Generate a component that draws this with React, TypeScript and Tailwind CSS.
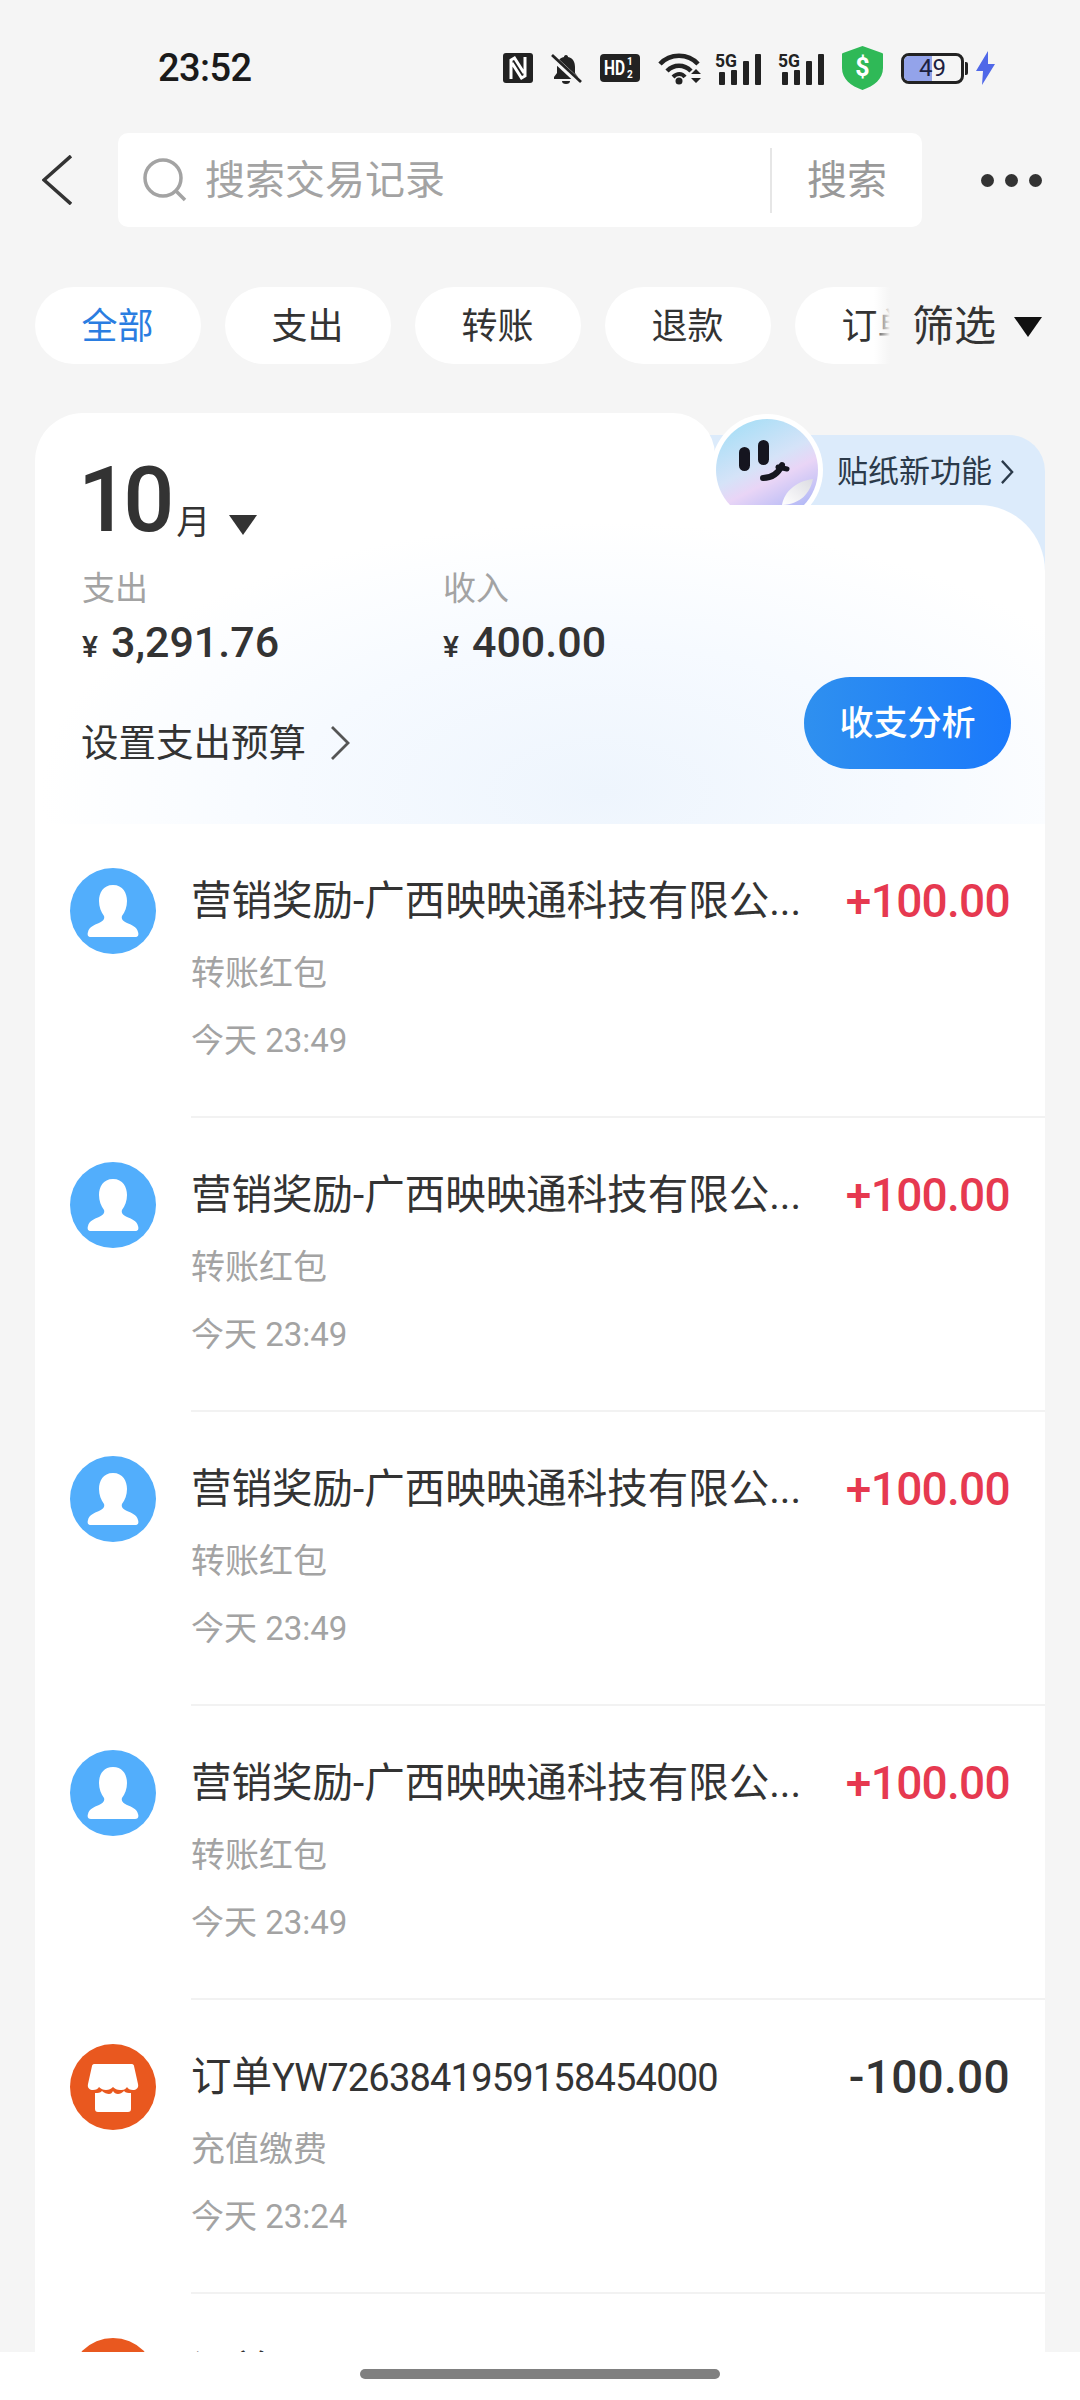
const FONT = "font-['Roboto','Noto_Sans_CJK_SC',sans-serif]";

const rows = [
  { kind: 'person', title: '营销奖励-广西映映通科技有限公...', sub: '转账红包', time: '今天 23:49', amount: '+100.00' },
  { kind: 'person', title: '营销奖励-广西映映通科技有限公...', sub: '转账红包', time: '今天 23:49', amount: '+100.00' },
  { kind: 'person', title: '营销奖励-广西映映通科技有限公...', sub: '转账红包', time: '今天 23:49', amount: '+100.00' },
  { kind: 'person', title: '营销奖励-广西映映通科技有限公...', sub: '转账红包', time: '今天 23:49', amount: '+100.00' },
  { kind: 'shop', title: '订单', code: 'YW7263841959158454000', sub: '充值缴费', time: '今天 23:24', amount: '-100.00' },
  { kind: 'shop', title: '订单', code: 'YW7263841959158454000', sub: '充值缴费', time: '今天 23:24', amount: '-100.00' },
];

function PersonIcon() {
  return (
    <svg viewBox="0 0 86 86" className="w-[86px] h-[86px] shrink-0">
      <circle cx="43" cy="43" r="43" fill="#52aefc" />
      <path d="M43 17c-10 0-14 8-14 16 0 6 2 11 5 15 1 3-1 5-5 7-5 2-10 4-11 9-1 3 0 5 3 5h44c3 0 4-2 3-5-1-5-6-7-11-9-4-2-6-4-5-7 3-4 5-9 5-15 0-8-4-16-14-16z" fill="#fff" />
    </svg>
  );
}

function ShopIcon() {
  return (
    <svg viewBox="0 0 86 86" className="w-[86px] h-[86px] shrink-0">
      <circle cx="43" cy="43" r="43" fill="#e9581f" />
      <path d="M24 20h38c1 0 2 1 2 2l4 18c1 4-2 6-5 6-3 0-5-1-6-3-2 3-4 3-7 3s-5-1-7-3c-2 2-4 3-7 3s-5-1-7-3c-1 2-3 3-6 3s-6-2-5-6l4-18c0-1 1-2 2-2z" fill="#fff" />
      <path d="M25 49c3 0 5 0 7-2 2 2 5 3 7 3 2 0 3-1 4-3 1 2 3 3 5 3 2 0 4-1 6-3 2 2 4 2 7 2v16c0 2-1 3-3 3H28c-2 0-3-1-3-3z" fill="#fff" />
    </svg>
  );
}

function Signal() {
  return (
    <svg viewBox="0 -4 47 41" className="w-[47px] h-[41px]">
      <text x="0" y="15" fontSize="19" fontWeight="700" fontFamily="Roboto" fill="#222" textLength="22" lengthAdjust="spacingAndGlyphs">5G</text>
      <rect x="4" y="20" width="6" height="13" rx="1" fill="#222" />
      <rect x="16" y="18" width="6" height="15" rx="1" fill="#222" />
      <rect x="28" y="9" width="6" height="24" rx="1" fill="#222" />
      <rect x="40" y="2" width="6" height="31" rx="1" fill="#222" />
    </svg>
  );
}

function StatusIcons() {
  return (
    <div className="flex items-center">
      {/* NFC */}
      <svg viewBox="0 0 30 30" className="w-[30px] h-[30px]">
        <rect width="30" height="30" rx="3" fill="#222" />
        <path d="M8 26V7l3.500-2L21 20M22 4v19l-3.500 2L9 10" fill="none" stroke="#fff" strokeWidth="3" />
      </svg>
      {/* muted bell */}
      <svg viewBox="0 0 32 33" className="w-[32px] h-[33px] ml-[17px]">
        <path d="M16 3c-1.500 0-2 1-2 2-5 1-7 5-7 10v6l-3 4v2h24v-2l-3-4v-6c0-5-2-9-7-10 0-1-.5-2-2-2z" fill="#222" />
        <path d="M12 29a4 3 0 0 0 8 0z" fill="#222" />
        <path d="M1 4l29 27" stroke="#f5f5f5" strokeWidth="6" />
        <path d="M2 3l29 27" stroke="#222" strokeWidth="2.800" />
      </svg>
      {/* HD badge */}
      <svg viewBox="0 0 40 28" className="w-[40px] h-[28px] ml-[18px]">
        <rect width="40" height="28" rx="4" fill="#222" />
        <text x="4" y="21" fontSize="20" fontWeight="700" fontFamily="Roboto" fill="#fff" textLength="21" lengthAdjust="spacingAndGlyphs">HD</text>
        <text x="27" y="11" fontSize="10" fontWeight="700" fontFamily="Roboto" fill="#fff">1</text>
        <text x="27" y="24" fontSize="10" fontWeight="700" fontFamily="Roboto" fill="#fff">2</text>
      </svg>
      {/* wifi */}
      <svg viewBox="0 0 45 33" className="w-[45px] h-[33px] ml-[18px]">
        <path d="M2 12C12 1 30 1 40 12" fill="none" stroke="#222" strokeWidth="4.500" />
        <path d="M9 19c7-7 17-7 24 0" fill="none" stroke="#222" strokeWidth="4.500" />
        <path d="M15 25c4-4 9-4 12 0" fill="none" stroke="#222" strokeWidth="4" />
        <circle cx="21" cy="29" r="3.500" fill="#222" />
        <path d="M33 22l5-5 5 5zM33 26l5 5 5-5z" fill="#222" />
      </svg>
      <div className="ml-[12px]"><Signal /></div>
      <div className="ml-[16px]"><Signal /></div>
      {/* shield */}
      <svg viewBox="0 0 41 44" className="w-[41px] h-[44px] ml-[17px]">
        <path d="M20.500 0L40 7c1 0 1 1 1 2v13c0 11-9 18-20.500 22C9 40 0 33 0 22V9c0-1 0-2 1-2z" fill="#2fb957" />
        <text x="20.500" y="30" textAnchor="middle" fontSize="25" fontWeight="700" fontFamily="Roboto" fill="#fff">$</text>
      </svg>
      {/* battery */}
      <div className="ml-[18px] flex items-center">
        <div className="relative w-[63px] h-[31px] rounded-[8px] border-[3px] border-[#222] overflow-hidden">
          <div className="h-full w-[28px] bg-[#93a3ea]" />
          <span className="absolute inset-0 flex items-center justify-center text-[24px] leading-none text-[#1c2140]">49</span>
        </div>
        <div className="w-[3px] h-[13px] ml-[1px] bg-[#222] rounded-r-[2px]" />
      </div>
      {/* charging */}
      <svg viewBox="0 0 19 34" className="w-[19px] h-[34px] ml-[8px]">
        <path d="M12 0L0 20h7L6 34 19 13h-7z" fill="#5068e8" />
      </svg>
    </div>
  );
}

function Face() {
  return (
    <svg viewBox="0 0 114 114" className="w-[114px] h-[114px]">
      <defs>
        <linearGradient id="faceBg" x1="0.2" y1="0" x2="0.7" y2="1">
          <stop offset="0" stopColor="#a5def6" />
          <stop offset="0.45" stopColor="#d5e3f8" />
          <stop offset="0.62" stopColor="#e9d5f6" />
          <stop offset="1" stopColor="#aab5f6" />
        </linearGradient>
        <linearGradient id="peel" x1="0" y1="1" x2="1" y2="0">
          <stop offset="0" stopColor="#ffffff" />
          <stop offset="1" stopColor="#dcdce2" />
        </linearGradient>
      </defs>
      <circle cx="57" cy="57" r="56" fill="#fff" />
      <circle cx="57" cy="57" r="51" fill="url(#faceBg)" />
      <rect x="29" y="34" width="11" height="24" rx="5.500" fill="#15151f" />
      <rect x="48" y="27" width="11" height="25" rx="5.500" fill="#15151f" />
      <path d="M53 65c9 0 15-4 19-13" fill="none" stroke="#15151f" strokeWidth="6" strokeLinecap="round" />
      <path d="M68 54l9 2" fill="none" stroke="#15151f" strokeWidth="5" strokeLinecap="round" />
      <path d="M72 92c2-13 14-24 31-26-3 14-12 25-31 26z" fill="url(#peel)" />
    </svg>
  );
}

export default function App() {
  return (
    <div className={`relative h-[2400px] w-[1080px] overflow-hidden bg-[#f5f5f5] ${FONT}`}>
      {/* status bar */}
      <div className="flex h-[133px] items-start justify-between pl-[158px] pr-[85px] pt-[46px]">
        <span className="text-[38px] leading-[44px] font-medium tracking-[-0.6px] text-[#1a1a1a]">23:52</span>
        <StatusIcons />
      </div>

      {/* search row */}
      <div className="flex h-[94px] items-center pl-[42px]">
        <svg viewBox="0 0 30 50" className="w-[30px] h-[50px] shrink-0">
          <path d="M29 1L2 25l27 24" fill="none" stroke="#333" strokeWidth="3.500" />
        </svg>
        <div className="ml-[46px] flex h-[94px] w-[804px] items-center rounded-[10px] bg-white pl-[25px]">
          <svg viewBox="0 0 44 44" className="w-[44px] h-[44px] shrink-0">
            <circle cx="20" cy="20" r="18" fill="none" stroke="#a3a3a3" strokeWidth="3.500" />
            <path d="M33 33l9 9" stroke="#a3a3a3" strokeWidth="3.500" />
          </svg>
          <span className="ml-[18px] w-[565px] pt-[2px] text-[40px] leading-none text-[#a3a3a3]">搜索交易记录</span>
          <div className="h-[65px] w-[2px] bg-[#e6e6e6]" />
          <span className="ml-[35px] pt-[2px] text-[40px] leading-none text-[#999]">搜索</span>
        </div>
        <div className="ml-[59px] flex gap-[11px]">
          <div className="h-[13px] w-[13px] rounded-full bg-[#333]" />
          <div className="h-[13px] w-[13px] rounded-full bg-[#333]" />
          <div className="h-[13px] w-[13px] rounded-full bg-[#333]" />
        </div>
      </div>

      {/* filter chips */}
      <div className="relative mt-[60px] flex h-[77px] gap-[24px] overflow-hidden pl-[35px]">
        {['全部', '支出', '转账', '退款', '订单'].map((c, i) => (
          <div
            key={c}
            className={`flex h-[77px] w-[166px] shrink-0 items-center justify-center rounded-full bg-white pt-[3px] pr-[1px] text-[36px] ${i === 0 ? 'text-[#2a7de1]' : 'text-[#333]'}`}
          >
            {c}
          </div>
        ))}
        <div className="absolute inset-y-0 left-[874px] right-0 flex items-center bg-[linear-gradient(to_right,transparent,#f5f5f5_16px)] pl-[38px] pt-[2px]">
          <span className="text-[42px] leading-none text-[#333]">筛选</span>
          <svg viewBox="0 0 28 20" className="ml-[18px] w-[28px] h-[20px]">
            <path d="M0 0h28L14 20z" fill="#111" />
          </svg>
        </div>
      </div>

      {/* card */}
      <div className="relative mx-[35px] mt-[49px] w-[1010px]">
        {/* sticker banner behind the card */}
        <div className="absolute right-0 top-[22px] flex h-[150px] w-[340px] items-start rounded-tr-[36px] bg-[#dcebfb] pl-[132px] pt-[16px]">
          <span className="text-[31px] leading-[42px] text-[#2b3a4a]">贴纸新功能</span>
          <svg viewBox="0 0 14 26" className="ml-[9px] mt-[8px] w-[13px] h-[26px]">
            <path d="M1 1l11 12L1 25" fill="none" stroke="#2b3a4a" strokeWidth="2.500" />
          </svg>
        </div>
        <div className="relative z-10 h-[92px] w-[680px] rounded-tl-[48px] rounded-tr-[42px] bg-white">
          <div className="absolute bottom-0 left-[640px] h-[42px] w-[50px] bg-white" />
        </div>
        <div className="absolute left-[675px] top-0 z-20">
          <Face />
        </div>

        {/* summary */}
        <div className="relative z-30 h-[319px] rounded-tr-[66px] bg-white bg-[radial-gradient(ellipse_560px_270px_at_56%_90%,#eef5fd_0%,#f6faff_55%,#ffffff_100%)] pl-[47px] pr-[34px]">
          <div className="flex h-0 items-start">
            <div className="-ml-[4px] -mt-[49px] flex items-end">
              <span className="text-[90px] leading-[90px] font-medium tracking-[-6px] text-[#333]">10</span>
              <span className="mb-[3px] ml-[8px] text-[34px] leading-[42px] text-[#333]">月</span>
              <svg viewBox="0 0 28 20" className="mb-[11px] ml-[19px] w-[28px] h-[20px]">
                <path d="M0 0h28L14 20z" fill="#333" />
              </svg>
            </div>
          </div>
          <div className="flex pt-[62px]">
            <div className="w-[361px]">
              <div className="text-[33px] leading-[44px] text-[#a3a3a3]">支出</div>
              <div className="mt-[5px] flex items-baseline leading-[52px] text-[#333]">
                <span className="text-[30px] font-medium">¥</span>
                <span className="ml-[13px] text-[43px] font-medium">3,291.76</span>
              </div>
            </div>
            <div>
              <div className="text-[33px] leading-[44px] text-[#a3a3a3]">收入</div>
              <div className="mt-[5px] flex items-baseline leading-[52px] text-[#333]">
                <span className="text-[30px] font-medium">¥</span>
                <span className="ml-[13px] text-[43px] font-medium">400.00</span>
              </div>
            </div>
          </div>
          <div className="mt-[4px] flex items-start justify-between">
            <div className="-ml-[1px] mt-[41px] flex items-center">
              <span className="text-[37.5px] leading-[50px] text-[#333]">设置支出预算</span>
              <svg viewBox="0 0 20 34" className="ml-[24px] w-[20px] h-[34px]">
                <path d="M2 1l16 16L2 33" fill="none" stroke="#555" strokeWidth="2.800" />
              </svg>
            </div>
            <div className="flex h-[92px] w-[207px] items-center justify-center rounded-full bg-[linear-gradient(to_right,#2f90ef,#1a79fb)] text-[34px] font-medium text-white">
              收支分析
            </div>
          </div>
        </div>

        {/* transactions */}
        <div className="bg-white">
          {rows.map((r, i) => (
            <div key={i} className="flex h-[294px] pl-[35px]">
              <div className="mt-[44px]">{r.kind === 'person' ? <PersonIcon /> : <ShopIcon />}</div>
              <div className="ml-[35px] flex-1 border-b-2 border-[#f2f2f2] pr-[35px] pt-[52px]">
                <div className="flex h-[50px] items-center justify-between">
                  <span className="text-[40.5px] leading-[50px] text-[#333]">
                    {r.title}
                    {r.code && <span className="text-[38px] tracking-[-0.8px]">{r.code}</span>}
                  </span>
                  <span className={`text-[46px] leading-[50px] font-medium ${r.kind === 'person' ? 'tracking-[-0.7px] text-[#e63950]' : 'tracking-[0.3px] text-[#333]'}`}>{r.amount}</span>
                </div>
                <div className="mt-[24px] text-[34px] leading-[46px] text-[#a3a3a3]">{r.sub}</div>
                <div className="mt-[22px] text-[33px] leading-[46px] text-[#a3a3a3]">{r.time}</div>
              </div>
            </div>
          ))}
        </div>
      </div>

      {/* gesture bar */}
      <div className="absolute inset-x-0 bottom-0 z-40 flex h-[48px] justify-center bg-white pt-[17px]">
        <div className="h-[10px] w-[360px] rounded-full bg-[#808080]" />
      </div>
    </div>
  );
}
